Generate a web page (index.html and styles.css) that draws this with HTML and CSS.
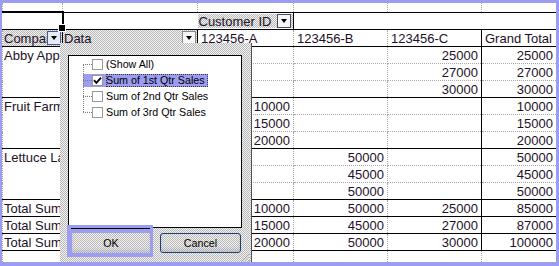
FILE: index.html
```html
<!DOCTYPE html>
<html lang="en">
<head>
  <meta charset="UTF-8" />
  <title>PivotTable filter</title>
  <link rel="stylesheet" href="styles.css">
</head>
<body>
  <div class="sheet">
    <table class="pivot">
      <colgroup>
        <col class="c-a"><col class="c-b"><col class="c-c"><col class="c-d"><col class="c-e"><col class="c-f">
      </colgroup>
      <tr class="r-top">
        <td></td><td></td><td></td><td></td><td></td><td></td>
      </tr>
      <tr class="r-colfield">
        <td class="sel"></td>
        <td></td>
        <td class="field"><div class="fb fb-col"><span class="fb-text">Customer ID</span><span class="dd dark"></span></div></td>
        <td colspan="3" class="end"></td>
      </tr>
      <tr class="r-head">
        <td class="field"><div class="fb"><span class="fb-text">Company</span><span class="dd hot"></span></div></td>
        <td class="field"><div class="fb"><span class="fb-text">Data</span><span class="dd"></span></div></td>
        <td>123456-A</td>
        <td>123456-B</td>
        <td>123456-C</td>
        <td class="gt">Grand Total</td>
      </tr>

      <tr class="grp">
        <td class="lbl">Abby Apple</td><td class="lbl"></td>
        <td class="n"></td><td class="n"></td><td class="n">25000</td><td class="n gt">25000</td>
      </tr>
      <tr>
        <td class="lbl"></td><td class="lbl"></td>
        <td class="n"></td><td class="n"></td><td class="n">27000</td><td class="n gt">27000</td>
      </tr>
      <tr>
        <td class="lbl"></td><td class="lbl"></td>
        <td class="n"></td><td class="n"></td><td class="n">30000</td><td class="n gt">30000</td>
      </tr>

      <tr class="grp">
        <td class="lbl">Fruit Farm</td><td class="lbl"></td>
        <td class="n">10000</td><td class="n"></td><td class="n"></td><td class="n gt">10000</td>
      </tr>
      <tr>
        <td class="lbl"></td><td class="lbl"></td>
        <td class="n">15000</td><td class="n"></td><td class="n"></td><td class="n gt">15000</td>
      </tr>
      <tr>
        <td class="lbl"></td><td class="lbl"></td>
        <td class="n">20000</td><td class="n"></td><td class="n"></td><td class="n gt">20000</td>
      </tr>

      <tr class="grp">
        <td class="lbl">Lettuce Land</td><td class="lbl"></td>
        <td class="n"></td><td class="n">50000</td><td class="n"></td><td class="n gt">50000</td>
      </tr>
      <tr>
        <td class="lbl"></td><td class="lbl"></td>
        <td class="n"></td><td class="n">45000</td><td class="n"></td><td class="n gt">45000</td>
      </tr>
      <tr>
        <td class="lbl"></td><td class="lbl"></td>
        <td class="n"></td><td class="n">50000</td><td class="n"></td><td class="n gt">50000</td>
      </tr>

      <tr class="grp">
        <td class="lbl">Total Sum</td><td class="lbl"></td>
        <td class="n">10000</td><td class="n">50000</td><td class="n">25000</td><td class="n gt">85000</td>
      </tr>
      <tr class="grp">
        <td class="lbl">Total Sum</td><td class="lbl"></td>
        <td class="n">15000</td><td class="n">45000</td><td class="n">27000</td><td class="n gt">87000</td>
      </tr>
      <tr class="grp">
        <td class="lbl">Total Sum</td><td class="lbl"></td>
        <td class="n">20000</td><td class="n">50000</td><td class="n">30000</td><td class="n gt">100000</td>
      </tr>
      <tr class="grp r-end">
        <td class="lbl"></td><td class="lbl"></td><td></td><td></td><td></td><td></td>
      </tr>
    </table>

    <!-- field filter dropdown for "Data" -->
    <div class="filter">
      <div class="list">
        <ul class="tree">
          <li><span class="stub"></span><span class="cb"></span><span class="lab">(Show All)</span></li>
          <li class="on"><span class="stub"></span><span class="cb"><svg width="9" height="9" viewBox="0 0 9 9"><path d="M1 4.2 3.4 6.8 8 1.6" fill="none" stroke="#000" stroke-width="1.8"/></svg></span><span class="lab">Sum of 1st Qtr Sales</span></li>
          <li><span class="stub"></span><span class="cb"></span><span class="lab">Sum of 2nd Qtr Sales</span></li>
          <li><span class="stub"></span><span class="cb"></span><span class="lab">Sum of 3rd Qtr Sales</span></li>
        </ul>
      </div>
      <div class="actions">
        <div class="ok-wrap"><button class="btn ok">OK</button></div>
        <button class="btn cancel">Cancel</button>
      </div>
      <svg class="grip" width="9" height="9" viewBox="0 0 9 9">
        <path d="M8.5 1 1 8.5M8.5 4 4 8.5M8.5 7 7 8.5" stroke="#8a8a8a" stroke-width="1"/>
        <path d="M8.5 2 2 8.5M8.5 5 5 8.5" stroke="#fff" stroke-width="1"/>
      </svg>
    </div>
  </div>
</body>
</html>
```

FILE: styles.css
```css
* {
  box-sizing: border-box;
}

body {
  margin: 0;
  background: #9c9cf0;
  font-family: "Liberation Sans", Arial, sans-serif;
}

.sheet {
  position: relative;
  margin: 3px 3px 0 2px;
  height: 259px;
  overflow: hidden;
  background: #fff;
}

/* dithered grey used by field buttons and the dialog */
.fb,
.filter,
.btn {
  background-color: #d6d6d6;
  background-image: conic-gradient(#b9b9b9 25%, #f2f2f2 0 50%, #b9b9b9 0 75%, #f2f2f2 0);
  background-size: 2px 2px;
}

.pivot {
  border-collapse: collapse;
  table-layout: fixed;
  width: 554px;
  font-size: 13px;
  color: #1e1028;
}

.c-a { width: 60px; }
.c-b { width: 135px; }
.c-c { width: 96px; }
.c-d { width: 94px; }
.c-e { width: 94px; }
.c-f { width: 75px; }

.pivot td {
  box-sizing: content-box;
  height: 16px;
  padding: 0 3px;
  border: 1px dotted #a8a8a8;
  white-space: nowrap;
  overflow: hidden;
  line-height: 15px;
}

.pivot .n {
  text-align: right;
}

.pivot td.lbl {
  border-top: none;
  border-bottom: none;
  padding-left: 1px;
}

.pivot tr.grp td {
  border-top: 1px solid #000;
}

.pivot td.gt {
  border-left: 1px solid #000;
  border-right: 1px solid #000;
}

.pivot .r-end td {
  border-left-color: #a8a8a8;
}

/* partial first row */
.pivot .r-top td {
  height: 8px;
  border-top: none;
  border-bottom: none;
}

/* column field row */
.pivot .r-colfield td {
  border-left: none;
  border-right: none;
  border-top: 1px solid #000;
  border-bottom: 1px solid #000;
}

.pivot .r-colfield td.sel {
  position: relative;
  overflow: visible;
  border-top: 2px solid #000;
  border-right: 2px solid #000;
}

.pivot td.sel::after {
  content: "";
  position: absolute;
  right: -4px;
  bottom: -3px;
  width: 6px;
  height: 6px;
  background: #000;
  border: 1px solid #fff;
}

.pivot .r-colfield td.end {
  border-right: 1px solid #000;
}

.pivot .r-head td {
  border-top: 1px solid #000;
  border-bottom: 1px solid #000;
}

.pivot td.field {
  padding: 0;
  border-right: 1px solid #000;
}

.fb {
  display: flex;
  align-items: center;
  height: 16px;
  padding-right: 1px;
}

.fb-col {
  height: 14px;
  margin-top: 1px;
  padding-right: 2px;
}

.fb-text {
  flex: 1;
  overflow: hidden;
  padding-left: 1px;
}

.dd {
  flex: none;
  width: 14px;
  height: 14px;
  display: flex;
  align-items: center;
  justify-content: center;
  border: 1px solid #8a8a8a;
  background: #f6f6f6;
}

.dd::after {
  content: "";
  border-style: solid;
  border-width: 4px 3.5px 0;
  border-color: #000 transparent transparent;
}

.dd.hot {
  border-color: #3f5c98;
  background: #e4ecf8;
}

.dd.dark {
  border-color: #4a4a66;
}

/* filter dialog */
.filter {
  position: absolute;
  left: 58px;
  top: 40px;
  width: 192px;
  height: 219px;
  padding: 12px 8px 0;
  border-right: 1px solid #505050;
  font-size: 10.7px;
  color: #000;
}

.list {
  width: 174px;
  height: 173px;
  border: 1px solid #000;
  background: #fff;
}

.tree {
  position: relative;
  list-style: none;
  margin: 0 0 0 14px;
  padding: 0;
}

.tree::before {
  content: "";
  position: absolute;
  left: 0;
  top: 8px;
  bottom: 8px;
  border-left: 1px dotted #7a7a7a;
}

.tree li {
  display: flex;
  align-items: center;
  width: max-content;
  height: 16px;
}

.tree li.on {
  background: linear-gradient(#9c9cf0, #9c9cf0) 0 2px / 100% 13px no-repeat;
}

.stub {
  width: 9px;
  border-top: 1px dotted #7a7a7a;
}

.cb {
  width: 11px;
  height: 11px;
  border: 1px solid #9a9a9a;
  background: #fff;
  display: flex;
  align-items: center;
  justify-content: center;
}

.lab {
  margin-left: 3px;
  padding: 0 2px 0 0;
  line-height: 13px;
}

.on .lab {
  outline: 1px dotted #333;
  outline-offset: -1px;
  padding-right: 3px;
}

.actions {
  display: flex;
  align-items: flex-start;
  gap: 7px;
  margin-top: -3px;
  margin-left: -1px;
}

.ok-wrap {
  position: relative;
  background: #9c9cf0;
  padding: 8px 3px 4px 5px;
}

.ok-wrap::before {
  content: "";
  position: absolute;
  top: 3px;
  left: 4px;
  right: 3px;
  height: 1px;
  background: #000;
}

.btn {
  height: 20px;
  padding: 0;
  font: inherit;
  color: #000;
  border: none;
  box-shadow: inset 0 -3px 3px rgba(150, 150, 170, 0.35);
}

.ok {
  width: 78px;
}

.cancel {
  width: 81px;
  margin-top: 8px;
  border: 1px solid #1c3f76;
  border-radius: 3px;
}

.grip {
  position: absolute;
  right: 1px;
  bottom: 0;
}
```
